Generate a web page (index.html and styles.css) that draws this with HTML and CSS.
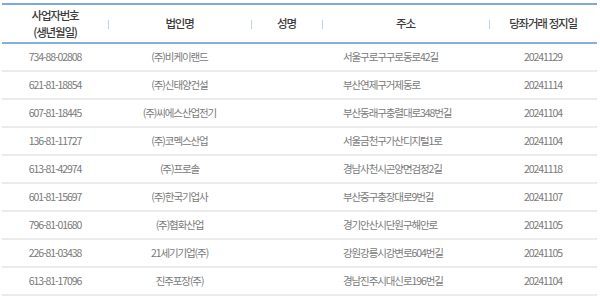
FILE: index.html
```html
<!DOCTYPE html>
<html lang="ko">
<head>
<meta charset="utf-8">
<link rel="stylesheet" href="styles.css">
</head>
<body>
<div class="wrap">
<table class="list">
<colgroup>
<col class="c1"><col class="c2"><col class="c3"><col class="c4"><col class="c5">
</colgroup>
<thead>
<tr>
<th>사업자번호<br>(생년월일)</th>
<th>법인명</th>
<th>성명</th>
<th>주소</th>
<th>당좌거래 정지일</th>
</tr>
</thead>
<tbody>
<tr><td>734-88-02808</td><td>(주)비케이랜드</td><td></td><td class="addr">서울구로구구로동로42길</td><td>20241129</td></tr>
<tr><td>621-81-18854</td><td>(주)신태양건설</td><td></td><td class="addr">부산연제구거제동로</td><td>20241114</td></tr>
<tr><td>607-81-18445</td><td>(주)씨에스산업전기</td><td></td><td class="addr">부산동래구충렬대로348번길</td><td>20241104</td></tr>
<tr><td>136-81-11727</td><td>(주)코멕스산업</td><td></td><td class="addr">서울금천구가산디지털1로</td><td>20241104</td></tr>
<tr><td>613-81-42974</td><td>(주)프로솔</td><td></td><td class="addr">경남사천시곤양면검정2길</td><td>20241118</td></tr>
<tr><td>601-81-15697</td><td>(주)한국기업사</td><td></td><td class="addr">부산중구충장대로9번길</td><td>20241107</td></tr>
<tr><td>796-81-01680</td><td>(주)협화산업</td><td></td><td class="addr">경기안산시단원구해안로</td><td>20241105</td></tr>
<tr><td>226-81-03438</td><td>21세기기업(주)</td><td></td><td class="addr">강원강릉시강변로604번길</td><td>20241105</td></tr>
<tr><td>613-81-17096</td><td>진주포장(주)</td><td></td><td class="addr">경남진주시대신로196번길</td><td>20241104</td></tr>
</tbody>
</table>
</div>
</body>
</html>
```

FILE: styles.css
```css
html, body {
  margin: 0;
  padding: 0;
  background: #ffffff;
}

.wrap {
  padding: 3px 3px 0 2px;
}

.list {
  width: 595px;
  border-collapse: collapse;
  table-layout: fixed;
  font-family: "Noto Sans CJK KR", "Noto Sans", sans-serif;
}

.c1 { width: 106px; }
.c2 { width: 143px; }
.c3 { width: 71px; }
.c4 { width: 167px; }
.c5 { width: 108px; }

.list thead tr {
  border-top: 2px solid #7fa9d9;
  border-bottom: 2px solid #86afdc;
}

.list th {
  position: relative;
  height: 37px;
  padding: 0;
  font-size: 11.5px;
  font-weight: 500;
  line-height: 17px;
  letter-spacing: -1.2px;
  color: #3c3c3c;
  text-align: center;
  vertical-align: middle;
}

.list th + th::before {
  content: "";
  position: absolute;
  left: 0;
  top: 15px;
  width: 1px;
  height: 9px;
  background: #bcd2ea;
}

.list tbody tr {
  border-bottom: 2px solid #ebebeb;
}

.list td {
  height: 26px;
  padding: 0;
  font-size: 10.5px;
  line-height: 14px;
  letter-spacing: -1.1px;
  color: #7a7a7a;
  text-align: center;
  vertical-align: middle;
  white-space: nowrap;
}

.list td.addr {
  text-align: left;
  padding-left: 21px;
}
```
